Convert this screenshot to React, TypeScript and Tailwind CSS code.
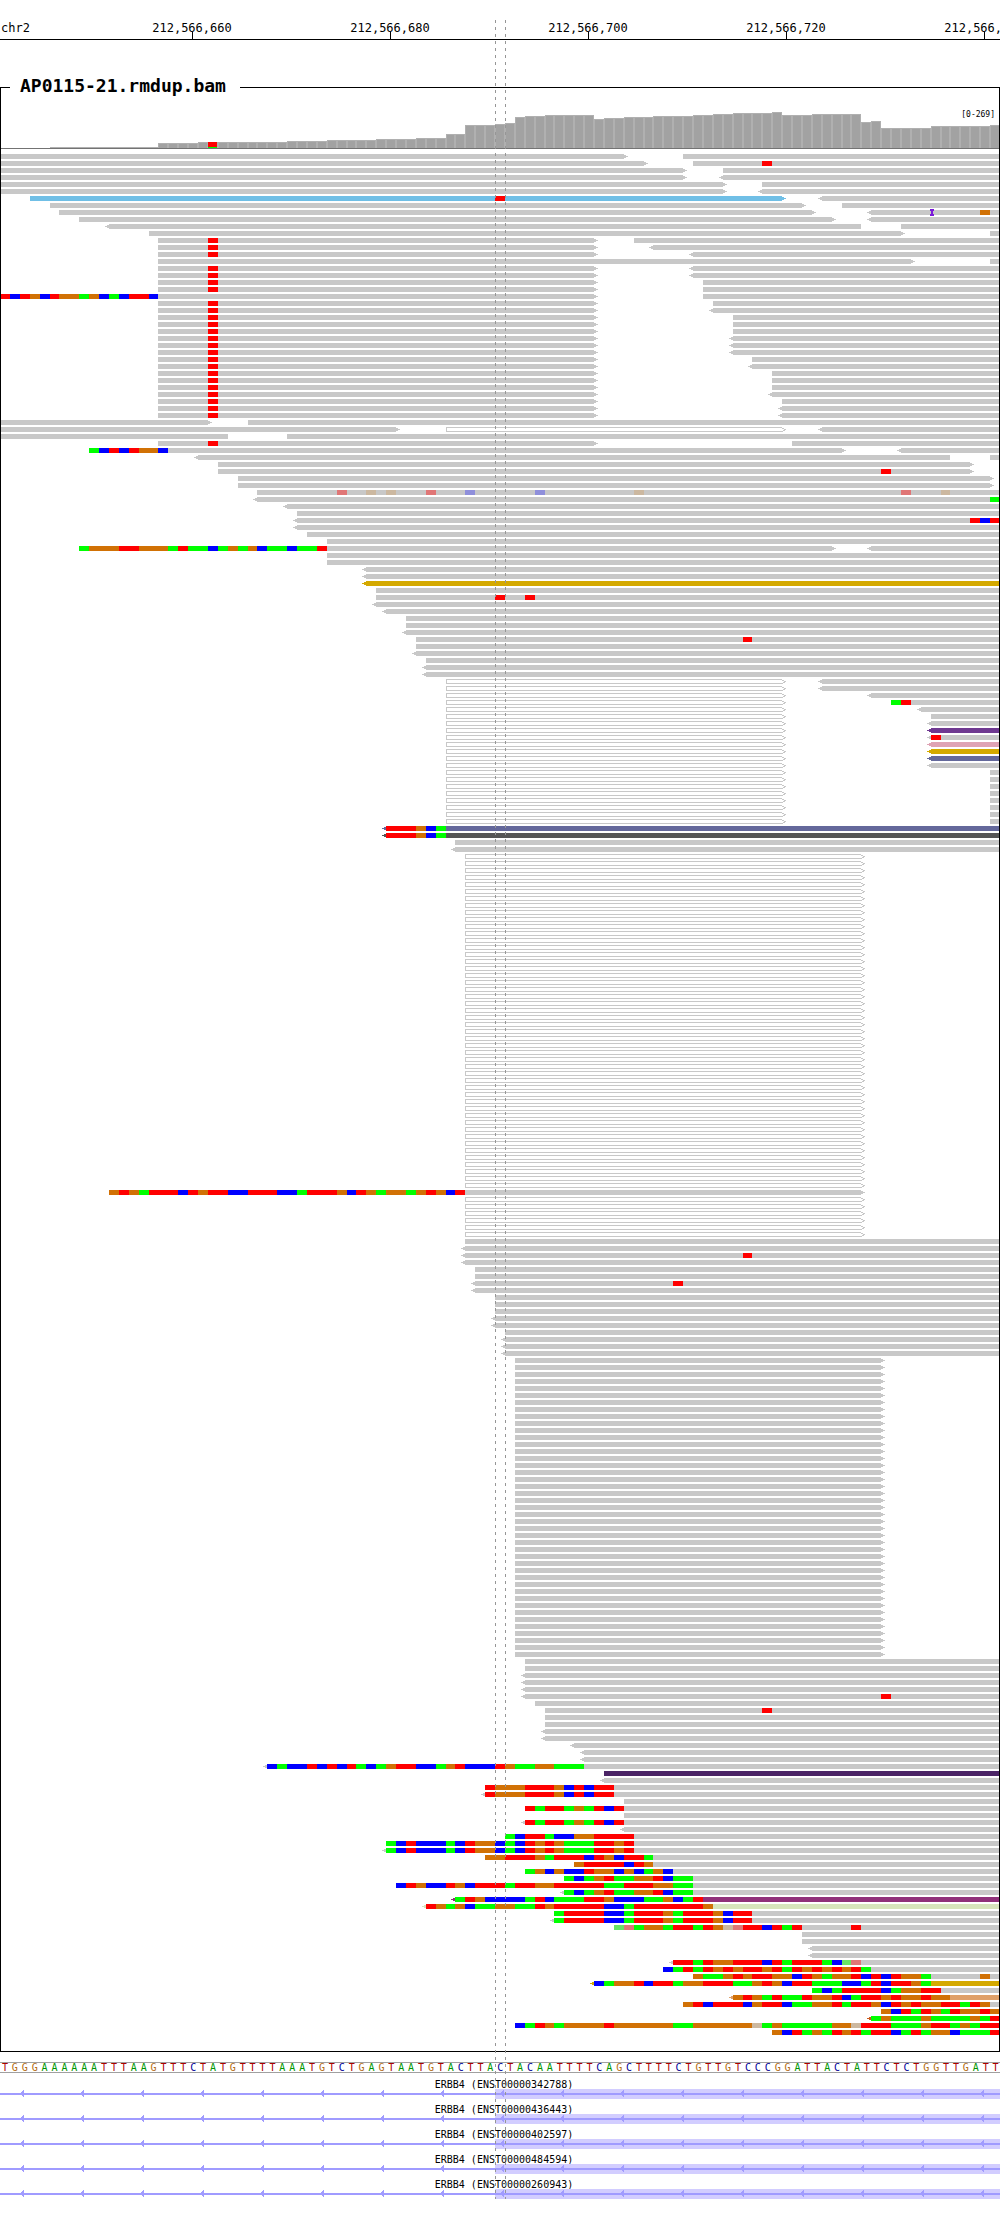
import React from "react";

const COLUMNS = 101;
const BASE_WIDTH = 1000 / COLUMNS;
const ROW_PITCH = 7;
const READ_HEIGHT = 5;

const edge = (column: number) => Math.round(column * BASE_WIDTH);

const BASE_COLORS: Record<string, string> = {
  A: "#00ff00",
  C: "#0000ff",
  G: "#d17105",
  T: "#ff0000",
  a: "#66e466",
  c: "#8f8fdb",
  g: "#ccb8a0",
  t: "#e07676",
};

const READ_COLORS: Record<string, string> = {
  sky: "#70bfe6",
  gold: "#d4a900",
  violet: "#6f3991",
  pink: "#dfa3b4",
  slate: "#64689b",
  dark: "#555555",
  plum: "#4b2466",
  magenta: "#90307a",
  pale: "#d7e4bc",
  peach: "#dfa069",
  rust: "#cc5a1e",
};

const GRAY = "#c8c8c8";

const repeat = (count: number, row: string) => Array.from({ length: count }, () => row);

/*
 * One string per pileup row, tokens separated by spaces:
 *   12-60    read from column 12 up to column 60 (open end: right edge)
 *   <12-60>  arrow heads on the left or right side
 *   h12-60>  outlined read (mapping quality zero)
 *   12-:gold coloured read
 *   21TCG    mismatching or clipped bases starting at column 21
 *   i94      insertion at the left edge of column 94
 */
const ROWS: string[] = [
  "0-63> 69-",
  "0-65> 70- 77T",
  "0-69> 73-",
  "0-69> <73-",
  "0-73> 77-",
  "0-73> <77-",
  "3-79>:sky 50T <83-",
  "5-81> 85-",
  "6-82> <88- i94 99G",
  "8-84> <88-",
  "<11-87 91-",
  "15-91> 100-",
  "16-60> 21T 64-",
  "16-60> 21T <66-",
  "16-60> 21T <70-",
  "16-92> 100-",
  "16-60> 21T <70-",
  "16-60> 21T <70-",
  "16-60> 21T 71-",
  "16-60> 21T 71-",
  "0-60> 0TCTGCTGGAGCACTTC 71-",
  "16-60> 21T 72-",
  "16-60> 21T <72-",
  ...repeat(3, "16-60> 21T 74-"),
  ...repeat(3, "16-60> 21T <74-"),
  "16-60> 21T 76-",
  "16-60> 21T <76-",
  ...repeat(3, "16-60> 21T 78-"),
  "16-60> 21T <78-",
  "16-60> 21T 79-",
  ...repeat(2, "16-60> 21T <79-"),
  "0-21> 25-",
  "0-40> h45-79> <83-",
  "0-23 29-",
  "16-60> 21T 80-",
  "9-85> 9ACTCTGGC <91-",
  "<20-96 100-",
  "22-98>",
  "22-98> 89T",
  ...repeat(2, "24-100>"),
  "26- 34t 37g 39g 43t 47c 54c 64g 91t 95g",
  "<26- 100A",
  "<29-",
  "30-",
  "<30- 98TCT",
  "<30-",
  "31-",
  "33-",
  "8-84> 8AGGGTTGGGATAACAGAGCAACAAT <88-",
  ...repeat(2, "33-"),
  ...repeat(2, "<37-"),
  "<37-:gold",
  "38-",
  "38- 50T 53T",
  "<38-",
  "<39-",
  ...repeat(2, "41-"),
  "<41-",
  "42- 75T",
  "42-",
  "<42-",
  "43-",
  ...repeat(2, "<43-"),
  ...repeat(2, "h45-79> <83-"),
  "h45-79> <88-",
  "h45-79> 90- 90AT",
  "h45-79> <93-",
  "h45-79> 94-",
  "h45-79> <94-",
  "h45-79> <94-:violet",
  "h45-79> <94- 94T",
  "h45-79> <94-:pink",
  "h45-79> <94-:gold",
  "h45-79> <94-:slate",
  "h45-79> <94-",
  ...repeat(8, "h45-79> 100-"),
  "<39-:slate 39TTTGCA",
  "<39-:dark 39TTTGCA",
  "46-",
  "<46-",
  ...repeat(48, "h47-87>"),
  "11-87> 11GTGATTTCTGTTCCTTTCCATTTGCTGAGGAGTGCT",
  ...repeat(6, "h47-87>"),
  "47-",
  "<47-",
  "<47- 75T",
  "<47-",
  ...repeat(2, "48-"),
  "<48- 68T",
  "<48-",
  ...repeat(3, "50-"),
  ...repeat(2, "<50-"),
  "51-",
  ...repeat(3, "<51-"),
  ...repeat(43, "52-89>"),
  ...repeat(2, "53-"),
  ...repeat(3, "<53-"),
  "<53- 89T",
  "54-",
  "55- 77T",
  ...repeat(2, "55-"),
  ...repeat(2, "<55-"),
  "<58-",
  ...repeat(2, "<59-"),
  "<27- 27CACCTCTCTACAGTTCCAGTCCCTGAAGGAAA",
  "61-:plum",
  "<61-",
  "49- 49TGGGTTTGCTCTT",
  "<49- 49TGGGTTTGCTCTT",
  "63-",
  "53- 53TATTAGATCT",
  "63-",
  "<53- 53TATTAGATCT",
  "<63-",
  "51- 51ACTTACCGGTTTT",
  "39- 39ACTCCCACTGGCACTGTGAAATTGT",
  "<39- 39ACTCCCACTGGCACTGTGAAATTGT",
  "49- 49GGTTTGATTTCTGCTTA",
  "58- 58GTTTTCTG",
  "53- 53AGCGCCTGGCGCAGC",
  "57- 57ACAGTAAGGTCAA",
  "40- 40CTGCCTGCTTTATTGGTTTTTAATTTGGAA",
  "<57- 57ACAGTAAGGTCAA",
  "<46-:magenta 46ATGCCCCATCAAATTGCCCAAGCAT",
  "<43-:pale 43TGAGCAAGGAATGTTTTTCCATTTTTTTG",
  "56- 56ATTTTCCATTTGATTTGCTT",
  "<56- 56ATTTTCCATTTGATTTGCTT",
  "62- 62atAGGATTATGgtTTCTAT 86T",
  ...repeat(2, "81-"),
  ...repeat(2, "<82-"),
  "<68- 68TTATGGTTTCTATTTACat",
  "67- 67CATATGTGTTGTATGTGTGTA",
  "70- 70GAAGTGTTGGCTGAGGTCTCTGGA 99G",
  "<60-:gold 60CAGGTCTTAGGTTTAAGTGCTTAAACCATCTTGA",
  "82- 82ACATTTTCAGGTT",
  "<74-:peach 74GTGATAATGGTCATTGTGGTGG",
  "69- 69GTCTTTCGTTCAAGGTATTGCTGTGGTTATG",
  "89- 89GCTATGATGGTG",
  "<88-:rust 88AGAAAGAAAAGAT",
  "52- 52CATGAGGGGTGGGGGGAAGGGGGGgAGAAAAAGGgTTTAAAGTTAGATT",
  "78- 78GCTAGATGTATTCATAGGCAAAT",
];

/* Runs of [first column, height of the coverage bar]. */
const COVERAGE: [number, number][] = [
  [0, 0], [5, 1], [16, 5], [20, 6], [29, 7], [33, 8], [38, 9], [42, 10], [45, 14],
  [47, 23], [50, 24], [51, 25], [52, 31], [53, 32], [55, 33], [60, 29], [61, 30],
  [63, 31], [66, 32], [70, 33], [72, 34], [74, 35], [78, 36], [79, 33], [82, 34],
  [87, 26], [88, 27], [89, 20], [94, 22], [100, 23],
];

const SEQUENCE =
  "TGGGAAAAAATTTAAGTTTCTATGTTTTAAATGTCTGAGTAATGTACTTACTACAATTTTCAGCTTTTCTGTTGTCCCGGATTACTATTCTCTGGTTGATT";

const LETTER_CLASSES: Record<string, string> = {
  A: "text-[#009600]",
  C: "text-[#000096]",
  G: "text-[#b36b12]",
  T: "text-[#aa0000]",
};

const TRANSCRIPTS = [
  "ENST00000342788",
  "ENST00000436443",
  "ENST00000402597",
  "ENST00000484594",
  "ENST00000260943",
];

const TICKS = ["212,566,660", "212,566,680", "212,566,700", "212,566,720", "212,566,740"];

function Read({ token, y }: { token: string; y: number }) {
  const match = /^(h?)(<?)(\d+)-(\d*)(>?)(?::(\w+))?$/.exec(token);
  if (match) {
    const [, hollow, left, from, to, right, color] = match;
    const x0 = edge(Number(from));
    const x1 = to ? edge(Number(to)) : 1000;
    const fill = color ? READ_COLORS[color] : GRAY;
    if (hollow) {
      return (
        <path
          fill={fill}
          d={`M${x0} ${y}H${x1}v1H${x0 + 1}v3H${x1 + 1}v1H${x0}ZM${x1} ${y + 1}h2v1h-2ZM${x1 + 2} ${y + 2}h2v1h-2ZM${x1 + 1} ${y + 3}h2v1h-2Z`}
        />
      );
    }
    const rightTip = right ? "v1h2v1h2v1h-2v1h-2v1" : "v5";
    const leftTip = left ? "v-1h-2v-1h-2v-1h2v-1h2" : "";
    return <path fill={fill} d={`M${x0} ${y}H${x1}${rightTip}H${x0}${leftTip}Z`} />;
  }
  if (token.startsWith("i")) {
    const x = edge(Number(token.slice(1))) - 1;
    return <path fill="#7a1ad9" d={`M${x} ${y - 1}h4v2h-1v3h1v2h-4v-2h1v-3h-1Z`} />;
  }
  const start = parseInt(token, 10);
  const bases = token.replace(/^\d+/, "");
  return (
    <>
      {[...bases].map((base, i) => (
        <rect
          key={i}
          x={edge(start + i)}
          y={y}
          width={edge(start + i + 1) - edge(start + i)}
          height={READ_HEIGHT}
          fill={BASE_COLORS[base]}
        />
      ))}
    </>
  );
}

function Pileup() {
  return (
    <svg viewBox="1 0 998 1902" className="block h-auto w-full" shapeRendering="crispEdges" role="img" aria-label="Aligned reads">
      {ROWS.map((row, r) =>
        row.split(" ").map((token, i) => <Read key={`${r}-${i}`} token={token} y={5 + r * ROW_PITCH} />),
      )}
    </svg>
  );
}

function Coverage() {
  const heights = Array.from({ length: COLUMNS }, (_, column) => {
    let height = 0;
    for (const [first, value] of COVERAGE) if (first <= column) height = value;
    return height;
  });
  return (
    <svg viewBox="1 0 998 48" className="block h-auto w-full" shapeRendering="crispEdges" role="img" aria-label="Coverage">
      {heights.map((height, column) => {
        const x = edge(column);
        const width = edge(column + 1) - x;
        return (
          <g key={column}>
            <rect x={x} y={47 - height} width={width} height={height} fill="#b0b0b0" />
            {height > 1 && <rect x={x + 1} y={48 - height} width={width - 2} height={height - 1} fill="#a2a2a2" />}
          </g>
        );
      })}
      <rect x={208} y={41} width={9} height={5} fill="#ff0000" />
      <rect x={208} y={46} width={9} height={1} fill="#00ff00" />
      <rect x={0} y={47} width={1000} height={1} fill="#737373" />
    </svg>
  );
}

function Ruler() {
  return (
    <header className="flex h-10 overflow-hidden border-b border-black pt-5 text-[12px] leading-4">
      <div className="w-[9.3%] shrink-0 pl-px">chr2</div>
      {TICKS.map((label) => (
        <div key={label} className="relative w-[19.8%] shrink-0 text-center">
          {label}
          <span className="absolute bottom-0 left-1/2 h-[7px] w-px bg-black" />
        </div>
      ))}
    </header>
  );
}

function Transcript({ id }: { id: string }) {
  return (
    <li>
      <div className="pt-[6px] pl-2 text-center text-[10px] leading-[9px]">ERBB4 ({id})</div>
      <svg viewBox="0 0 1000 10" className="block h-auto w-full" shapeRendering="crispEdges" aria-hidden="true">
        <rect x={495} y={0} width={505} height={10} fill="#d2cdff" />
        <rect x={0} y={4} width={1000} height={2} fill="#a09bff" />
        {Array.from({ length: 17 }, (_, i) => (
          <path key={i} d={`M${20 + i * 60} 4h1v-1h1v-1h1v-1h1v7h-1v-1h-1v-1h-1v-1h-1Z`} fill="#a09bff" />
        ))}
      </svg>
    </li>
  );
}

export default function App() {
  return (
    <main className="bg-white font-['DejaVu_Sans_Mono',monospace] text-black">
      <div className="relative overflow-hidden">
        <Ruler />

        <fieldset className="mt-[34px] min-w-0 border border-black">
          <legend className="ml-[9px] pr-[14px] pb-[3px] pl-[10px] text-[18px] leading-6 font-bold">AP0115-21.rmdup.bam</legend>
          <div className="relative">
            <span className="absolute top-2 right-1 text-[8px] leading-3">[0-269]</span>
            <Coverage />
          </div>
          <Pileup />
        </fieldset>

        <div className="mt-[10px] flex h-[11px] border-y border-[#a0a0a0] text-[10px] leading-[9px]">
          {[...SEQUENCE].map((letter, i) => (
            <span key={i} className={`min-w-0 flex-1 text-center ${LETTER_CLASSES[letter]}`}>
              {letter}
            </span>
          ))}
        </div>

        <ul className="mt-px">
          {TRANSCRIPTS.map((id) => (
            <Transcript key={id} id={id} />
          ))}
        </ul>

        <div className="pointer-events-none absolute top-5 bottom-0 left-[49.5%] w-px bg-[repeating-linear-gradient(to_bottom,#969696_0px,#969696_3px,transparent_3px,transparent_7px)]" />
        <div className="pointer-events-none absolute top-5 bottom-0 left-[50.5%] w-px bg-[repeating-linear-gradient(to_bottom,#969696_0px,#969696_3px,transparent_3px,transparent_7px)]" />
      </div>
    </main>
  );
}
